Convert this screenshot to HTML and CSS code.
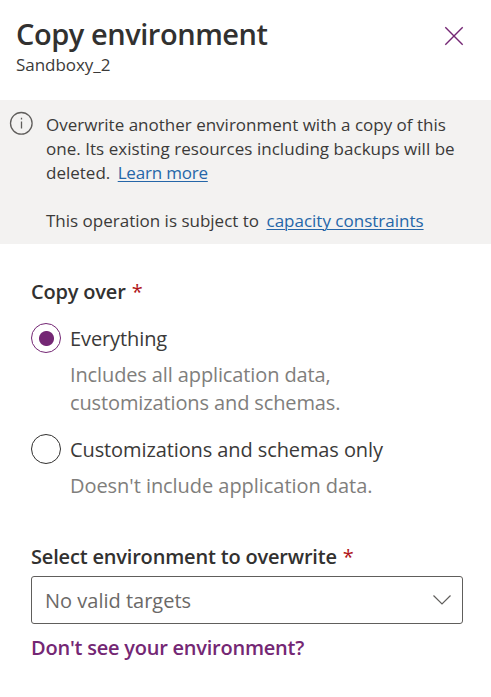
FILE: index.html
```html
<!DOCTYPE html>
<html lang="en">
<head>
<meta charset="utf-8">
<title>Copy environment</title>
<link rel="stylesheet" href="styles.css">
</head>
<body>
<main class="panel">
  <header class="header">
    <div>
      <h1 class="title">Copy environment</h1>
      <p class="subtitle">Sandboxy_2</p>
    </div>
    <button class="close" aria-label="Close"><svg width="20" height="20" viewBox="0 0 20 20"><path d="M1.3 1.3l17.4 17.4M18.7 1.3l-17.4 17.4"/></svg></button>
  </header>
  <section class="notice">
    <svg class="info" width="24" height="24" viewBox="0 0 24 24"><circle cx="12.3" cy="12.3" r="10.8"/><path d="M12.5 10.5v7M12.5 6.8v1.8"/></svg>
    <div class="message">
      <p>Overwrite another environment with a copy of this<br><span class="wide">one. Its existing resources including backups will be</span><br>deleted. <a class="link learn" href="#">Learn more</a></p>
      <p class="second">This operation is subject to <a class="link" href="#">capacity constraints</a></p>
    </div>
  </section>
  <form class="form">
    <div class="label">Copy over <span class="required">*</span></div>
    <label class="option"><span class="radio selected"></span><span class="text"><span class="name">Everything</span><span class="hint includes">Includes all application data,<br>customizations and schemas.</span></span></label>
    <label class="option"><span class="radio"></span><span class="text"><span class="name">Customizations and schemas only</span><span class="hint">Doesn't include application data.</span></span></label>
    <div class="label target">Select environment to overwrite <span class="required">*</span></div>
    <div class="select"><span class="value">No valid targets</span><svg width="20" height="12" viewBox="0 0 20 12"><path d="M1.5 1.5l8.5 8.5 8.5-8.5"/></svg></div>
    <a class="help" href="#">Don't see your environment?</a>
  </form>
</main>
</body>
</html>
```
FILE: styles.css
```css
* { box-sizing: border-box; }
body { margin: 0; background: #fff; color: #3b3a39; font-family: "Open Sans", "Noto Sans", sans-serif; }
h1, p { margin: 0; }
.panel { width: 491px; height: 697px; overflow: hidden; }
.header { height: 100px; padding: 14px 27px 0 16px; display: flex; justify-content: space-between; }
.title { color: #323130; font-size: 29px; line-height: 40px; font-weight: 600; letter-spacing: -0.45px; }
.subtitle { font-size: 17px; line-height: 22px; letter-spacing: -0.05px; }
.close { width: 20px; height: 20px; margin-top: 12px; padding: 0; border: 0; background: none; }
svg { display: block; fill: none; }
.close svg { stroke: #742774; stroke-width: 1.4; }
.notice { height: 144px; padding: 11px 9px 0; display: flex; gap: 13px; background: #f3f2f1; }
.info { flex: none; stroke: #605e5c; stroke-width: 1.3; }
.message { padding-top: 2px; font-size: 17px; line-height: 24px; white-space: nowrap; }
.wide { letter-spacing: 0.03px; }
.second { margin-top: 24px; }
.link { color: #2566a8; margin-left: 3px; text-underline-offset: 2px; text-decoration-thickness: 1px; }
.learn { letter-spacing: -0.2px; }
.form { padding: 34px 28px 0 31px; white-space: nowrap; }
.label { color: #323130; font-size: 20px; line-height: 28px; font-weight: 600; letter-spacing: -0.18px; }
.required { color: #b0151a; font-weight: 400; margin-left: 1px; }
.option { display: flex; gap: 9px; margin-top: 17px; font-size: 20px; line-height: 28px; letter-spacing: -0.1px; }
.text { padding-top: 2px; }
.radio { width: 30px; height: 30px; border: 1px solid #323130; border-radius: 50%; }
.selected { border-color: #742774; background: radial-gradient(circle at 14.5px 14.5px, #742774 7px, transparent 8px); }
.name, .hint { display: block; }
.hint { margin-top: 8px; color: #807e7c; letter-spacing: -0.05px; }
.includes { letter-spacing: -0.12px; }
.target { margin-top: 43px; }
.select { height: 48px; margin-top: 5px; padding: 0 10px 0 13px; display: flex; align-items: center; justify-content: space-between; border: 1px solid #605e5c; border-radius: 3px; font-size: 20px; color: #6b6967; }
.value { padding-top: 1px; }
.select svg { stroke: #605e5c; stroke-width: 1.2; }
.help { display: block; margin-top: 10px; font-size: 20px; line-height: 28px; font-weight: 600; letter-spacing: -0.23px; color: #742774; text-decoration: none; }
```
